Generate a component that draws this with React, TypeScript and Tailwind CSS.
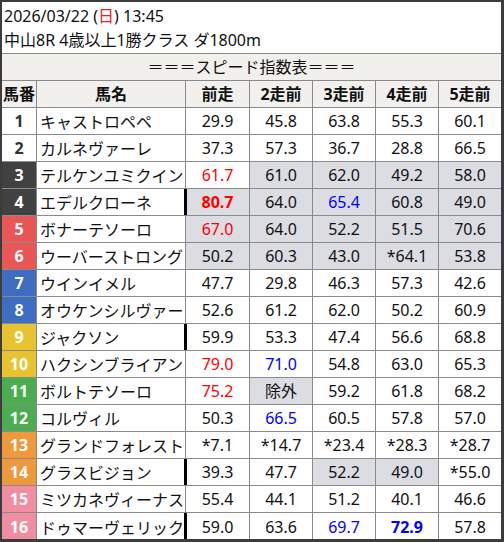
import React from "react";

type Cell = { v: string; c?: "r" | "b"; bold?: boolean; g?: boolean };
type Row = { no: number; name: string; bar?: boolean; cells: Cell[] };

const frameColors: Record<number, string> = {
  1: "bg-white text-[#333]",
  2: "bg-white text-[#333]",
  3: "bg-[#414141] text-white",
  4: "bg-[#414141] text-white",
  5: "bg-[#e85656] text-white",
  6: "bg-[#e85656] text-white",
  7: "bg-[#3e6cc0] text-white",
  8: "bg-[#3e6cc0] text-white",
  9: "bg-[#e7c42f] text-white",
  10: "bg-[#e7c42f] text-white",
  11: "bg-[#4cad50] text-white",
  12: "bg-[#4cad50] text-white",
  13: "bg-[#f0983c] text-white",
  14: "bg-[#f0983c] text-white",
  15: "bg-[#f08da0] text-white",
  16: "bg-[#f08da0] text-white",
};

const n = (v: string, extra: Partial<Cell> = {}): Cell => ({ v, ...extra });

const rows: Row[] = [
  { no: 1, name: "キャストロペペ", cells: [n("29.9"), n("45.8"), n("63.8"), n("55.3"), n("60.1")] },
  { no: 2, name: "カルネヴァーレ", cells: [n("37.3"), n("57.3"), n("36.7"), n("28.8"), n("66.5")] },
  { no: 3, name: "テルケンユミクイン", cells: [n("61.7", { c: "r" }), n("61.0", { g: true }), n("62.0", { g: true }), n("49.2", { g: true }), n("58.0", { g: true })] },
  { no: 4, name: "エデルクローネ", bar: true, cells: [n("80.7", { c: "r", bold: true, g: true }), n("64.0", { g: true }), n("65.4", { c: "b", g: true }), n("60.8", { g: true }), n("49.0", { g: true })] },
  { no: 5, name: "ボナーテソーロ", cells: [n("67.0", { c: "r", g: true }), n("64.0", { g: true }), n("52.2", { g: true }), n("51.5", { g: true }), n("70.6", { g: true })] },
  { no: 6, name: "ウーバーストロング", cells: [n("50.2", { g: true }), n("60.3", { g: true }), n("43.0", { g: true }), n("*64.1", { g: true }), n("53.8", { g: true })] },
  { no: 7, name: "ウインイメル", cells: [n("47.7"), n("29.8"), n("46.3"), n("57.3"), n("42.6")] },
  { no: 8, name: "オウケンシルヴァー", cells: [n("52.6"), n("61.2"), n("62.0"), n("50.2"), n("60.9")] },
  { no: 9, name: "ジャクソン", bar: true, cells: [n("59.9"), n("53.3"), n("47.4"), n("56.6"), n("68.8")] },
  { no: 10, name: "ハクシンブライアン", cells: [n("79.0", { c: "r" }), n("71.0", { c: "b" }), n("54.8"), n("63.0"), n("65.3")] },
  { no: 11, name: "ボルトテソーロ", cells: [n("75.2", { c: "r" }), n("除外", { g: true }), n("59.2"), n("61.8"), n("68.2")] },
  { no: 12, name: "コルヴィル", cells: [n("50.3"), n("66.5", { c: "b" }), n("60.5"), n("57.8"), n("57.0")] },
  { no: 13, name: "グランドフォレスト", cells: [n("*7.1"), n("*14.7"), n("*23.4"), n("*28.3"), n("*28.7")] },
  { no: 14, name: "グラスビジョン", bar: true, cells: [n("39.3"), n("47.7"), n("52.2", { g: true }), n("49.0", { g: true }), n("*55.0")] },
  { no: 15, name: "ミツカネヴィーナス", cells: [n("55.4"), n("44.1"), n("51.2"), n("40.1"), n("46.6")] },
  { no: 16, name: "ドゥマーヴェリック", bar: true, cells: [n("59.0"), n("63.6"), n("69.7", { c: "b" }), n("72.9", { c: "b", bold: true }), n("57.8")] },
];

const grid = "grid grid-cols-[35px_149px_64px_63px_63px_63px_62px]";

export default function App() {
  return (
    <div
      className="w-[504px] h-[542px] bg-white border-[#3c3c3c] border-l-2 border-t-2 border-r-[3px] border-b-[3px] text-[#111] overflow-hidden"
      style={{ fontFamily: '"Noto Sans", "Noto Sans CJK JP", sans-serif' }}
    >
      <div className="h-[52px] border-b border-[#8a8a8a] pl-[2px] pt-[2px] text-[16px] leading-[24px]">
        <div>
          2026/03/22 (<span className="text-[#f02020]">日</span>) 13:45
        </div>
        <div>中山8R 4歳以上1勝クラス ダ1800m</div>
      </div>
      <div className="h-[27px] border-b border-[#8a8a8a] bg-[#f1f0ed] flex items-center justify-center text-[16px]">
        ＝＝＝スピード指数表＝＝＝
      </div>
      <div className={`${grid} h-[27px] bg-[#f1f0ed] border-b border-[#8a8a8a] text-[16px] font-bold`}>
        {["馬番", "馬名", "前走", "2走前", "3走前", "4走前", "5走前"].map((h, i) => (
          <div
            key={h}
            className={`flex items-center justify-center ${i < 6 ? "border-r border-[#8a8a8a]" : ""}`}
          >
            {h}
          </div>
        ))}
      </div>
      {rows.map((r, ri) => (
        <div
          key={r.no}
          className={`${grid} h-[27px] text-[16px] ${ri < rows.length - 1 ? "border-b border-[#8a8a8a]" : ""}`}
        >
          <div className={`flex items-center justify-center font-bold border-r border-[#8a8a8a] ${frameColors[r.no]}`}>
            {r.no}
          </div>
          <div
            className={`flex items-center pl-[3px] whitespace-nowrap border-r ${
              r.bar ? "border-black shadow-[inset_-1px_0_0_#000]" : "border-[#8a8a8a]"
            }`}
            style={{ fontFamily: '"Noto Sans CJK JP", sans-serif' }}
          >
            {r.name}
          </div>
          {r.cells.map((c, ci) => (
            <div
              key={ci}
              className={`flex items-center justify-center ${ci < 4 ? "border-r border-[#8a8a8a]" : ""} ${
                c.g ? "bg-[#dcdde2]" : "bg-white"
              } ${c.c === "r" ? "text-[#ff0000]" : c.c === "b" ? "text-[#0000ff]" : ""} ${
                c.bold ? "font-bold" : ""
              } ${ci === 0 && r.bar ? "shadow-[inset_1px_0_0_#000]" : ""}`}
            >
              {c.v}
            </div>
          ))}
        </div>
      ))}
    </div>
  );
}
